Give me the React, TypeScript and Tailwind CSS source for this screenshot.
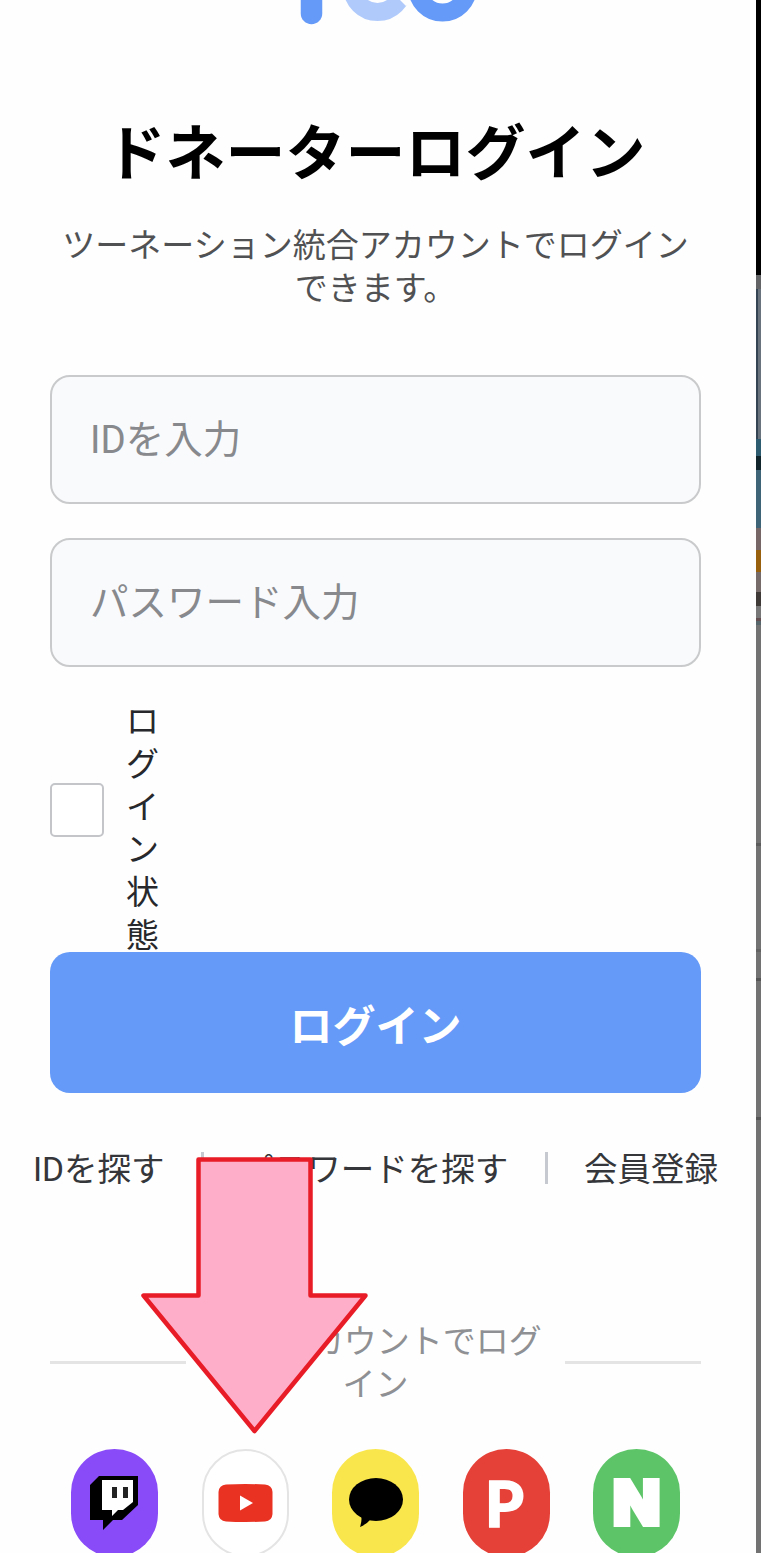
import React from "react";

const socialBase =
  "flex h-[108px] w-[87px] shrink-0 items-center justify-center rounded-full";

function Logo() {
  return (
    <svg className="ml-[280px] block h-[26px] w-[200px] shrink-0" viewBox="0 0 200 26" fill="none">
      <path d="M31.500 -10V13.500" stroke="#659af8" strokeWidth="21.500" strokeLinecap="round" />
      <circle cx="97.500" cy="-13.500" r="25.500" stroke="#b0cbfb" strokeWidth="18" />
      <path d="M117 -3L126 6L136 -3Z" fill="#fefefe" />
      <circle cx="162.500" cy="-13" r="25.500" stroke="#659af8" strokeWidth="18" />
    </svg>
  );
}

function Separator() {
  return <span className="h-8 w-[3px] bg-[#c6cad0]" />;
}

function TwitchIcon() {
  return (
    <svg className="mr-[1px] h-[54px] w-[50px]" viewBox="0 0 50 54">
      <path d="M10 0H49V29L33 44H24L14 54V44H1V9Z" fill="#000" />
      <path d="M13 4H44V26L34 34H29L23 40V34H13Z" fill="#fff" />
      <path d="M23 11H28V22H23ZM34 11H39V22H34Z" fill="#222" />
    </svg>
  );
}

function YoutubeIcon() {
  return (
    <svg className="h-[38px] w-[55px]" viewBox="0 0 55 38">
      <path d="M8 .5Q27 -.5 47 .5Q54 1 54.500 8V30Q54 37 47 37.500Q27 38.500 8 37.500Q1 37 .5 30V8Q1 1 8 .5Z" fill="#ea3223" />
      <path d="M22 11.500L35 19L22 26.500Z" fill="#fff" />
    </svg>
  );
}

function TalkIcon() {
  return (
    <svg className="h-[50px] w-[54px]" viewBox="0 0 54 50">
      <ellipse cx="27" cy="21.500" rx="27" ry="21.500" fill="#000" />
      <path d="M11 35Q14 40 11 49Q18 46 23 40Z" fill="#000" />
    </svg>
  );
}

function BackdropStrip() {
  return (
    <div className="flex h-full w-[5px] shrink-0 flex-col overflow-hidden bg-[#727272]">
      <div className="h-[275px] shrink-0 bg-black" />
      <div className="h-[14px] shrink-0 bg-[#626466]" />
      <div className="h-[150px] shrink-0 border-l-2 border-[#344453] bg-[#68737e]" />
      <div className="h-[17px] shrink-0 bg-[#2d5c70]" />
      <div className="h-[14px] shrink-0 bg-[#10262c]" />
      <div className="h-[58px] shrink-0 bg-[#3d6577]" />
      <div className="h-[22px] shrink-0 bg-[#766666]" />
      <div className="h-[22px] shrink-0 bg-[#98600c]" />
      <div className="h-[20px] shrink-0 bg-[#766b68]" />
      <div className="h-[14px] shrink-0 bg-[#3f3938]" />
      <div className="h-[12px] shrink-0 bg-[#777]" />
      <div className="h-[3px] shrink-0 bg-[#654e50]" />
      <div className="h-[4px] shrink-0 bg-[#56666a]" />
      <div className="h-[218px] shrink-0" />
      <div className="h-[3px] shrink-0 bg-[#5c5c5c]" />
      <div className="h-[103px] shrink-0" />
      <div className="h-[3px] shrink-0 bg-[#626262]" />
      <div className="h-[26px] shrink-0" />
      <div className="h-[3px] shrink-0 bg-[#555]" />
      <div className="h-[136px] shrink-0" />
      <div className="h-[3px] shrink-0 bg-[#555]" />
    </div>
  );
}

export default function App() {
  return (
    <div className="relative flex h-[1553px] w-[761px] overflow-hidden bg-white [font-family:Roboto,'Noto_Sans_CJK_JP',sans-serif]">
      <main className="flex h-full w-[756px] shrink-0 flex-col bg-[#fefefe] pr-[5px]">
        <Logo />
        <h1 className="mt-[87px] shrink-0 text-center text-[60px] leading-[84px] font-bold whitespace-nowrap text-black">
          ドネーターログイン
        </h1>
        <p className="mt-[27px] shrink-0 text-center text-[33px] leading-[43px] whitespace-nowrap text-[#505153]">
          ツーネーション統合アカウントでログイン
          <br />
          できます。
        </p>
        <form className="mx-[50px] mt-[65px] flex shrink-0 flex-col" onSubmit={(e) => e.preventDefault()}>
          <input
            type="text"
            placeholder="IDを入力"
            className="h-[129px] w-full rounded-[20px] border-2 border-[#c9cacb] bg-[#f9fafc] px-[38px] text-[38.500px] outline-none placeholder:text-[#87898d]"
          />
          <input
            type="password"
            placeholder="パスワード入力"
            className="mt-[34px] h-[129px] w-full rounded-[20px] border-2 border-[#c9cacb] bg-[#f9fafc] px-[38px] text-[38.500px] outline-none placeholder:text-[#87898d]"
          />
          <label className="mt-[33px] flex h-[252px] items-start">
            <input
              type="checkbox"
              className="mt-[83px] h-[54px] w-[54px] appearance-none rounded-[5px] border-2 border-[#c3c5c9] bg-white"
            />
            <span className="mt-px ml-[22px] w-[33px] text-[33px] leading-[42.800px] break-all text-[#26282b]">
              ログイン状態
            </span>
          </label>
          <button
            type="submit"
            className="h-[141px] w-full rounded-[20px] bg-[#659af8] pt-[9px] text-[43px] font-bold text-white"
          >
            ログイン
          </button>
        </form>
        <nav className="mt-[53px] ml-[33px] flex h-[44px] w-[685px] shrink-0 items-center justify-between text-[33.500px] leading-[44px] whitespace-nowrap text-[#34363a]">
          <a className="pt-[3px]">IDを探す</a>
          <Separator />
          <a className="pt-[3px]">パスワードを探す</a>
          <Separator />
          <a className="pt-[3px]">会員登録</a>
        </nav>
        <div className="mx-[50px] mt-[129px] flex h-[86px] shrink-0 items-center justify-between">
          <span className="h-[3px] w-[136px] bg-[#e4e4e5]" />
          <p className="pt-[2px] text-center text-[33px] leading-[43px] whitespace-nowrap text-[#8e9093]">
            <span className="tracking-[2px]">SNS</span>アカウントでログ
            <br />
            イン
          </p>
          <span className="h-[3px] w-[136px] bg-[#e4e4e5]" />
        </div>
        <div className="mt-[44px] ml-[71px] flex w-[609px] shrink-0 justify-between">
          <a className={`${socialBase} bg-[#894af7]`}>
            <TwitchIcon />
          </a>
          <a className={`${socialBase} border-2 border-[#e4e4e5] bg-white`}>
            <YoutubeIcon />
          </a>
          <a className={`${socialBase} bg-[#f9e64d]`}>
            <TalkIcon />
          </a>
          <a className={`${socialBase} bg-[#e54138] pr-[3px] [font-family:Lato,sans-serif] text-[62px] leading-none font-black text-white [-webkit-text-stroke:1.5px_white] [stroke-linejoin:round]`}>
            P
          </a>
          <a className={`${socialBase} bg-[#5dc568] [font-family:Inter,sans-serif] text-[62px] leading-none font-black text-white [-webkit-text-stroke:4px_white]`}>
            N
          </a>
        </div>
      </main>
      <BackdropStrip />
      <svg className="absolute top-[1156px] left-[140px] h-[280px] w-[230px]" viewBox="140 1156 230 280">
        <path
          d="M198.500 1159.500H310.500V1295.500H365.500L254.500 1431L143.500 1295.500H198.500Z"
          fill="#ffaec9"
          stroke="#e81c27"
          strokeWidth="4.500"
          strokeLinejoin="round"
        />
      </svg>
    </div>
  );
}
